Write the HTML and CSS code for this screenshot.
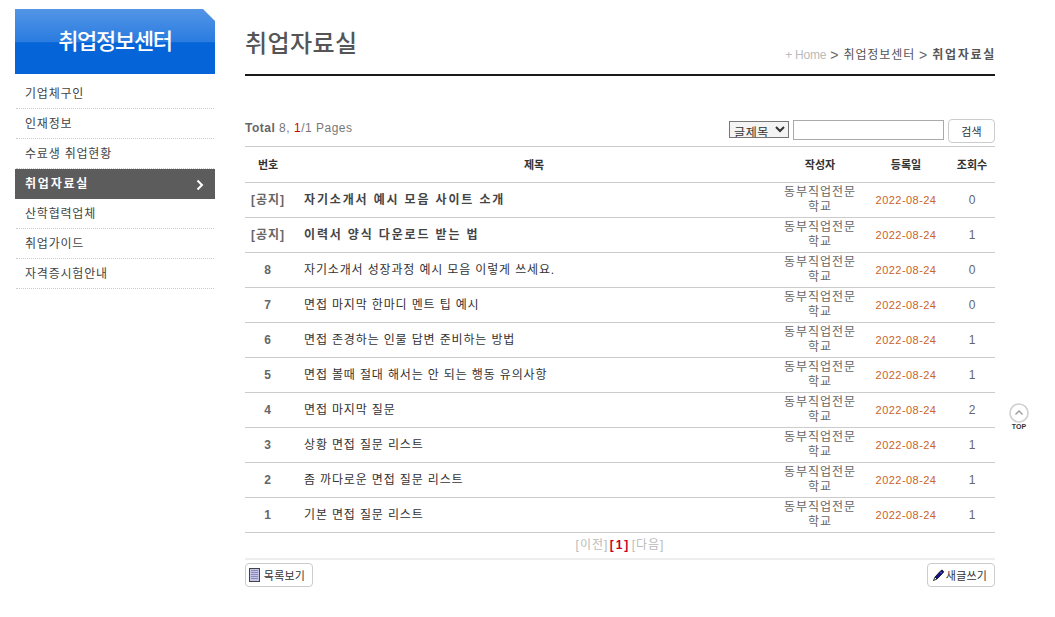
FILE: index.html
```html
<!DOCTYPE html>
<html lang="ko">
<head>
<meta charset="utf-8">
<title>취업자료실</title>
<link rel="stylesheet" href="styles.css">
</head>
<body>
<div class="page">
  <aside class="side">
    <h2 class="side-title">취업정보센터</h2>
    <ul class="menu">
      <li><a>기업체구인</a></li>
      <li><a>인재정보</a></li>
      <li><a>수료생 취업현황</a></li>
      <li class="on"><a>취업자료실</a><svg class="chev" width="8" height="12" viewBox="0 0 8 12"><path d="M1.500 1.500 6 6l-4.500 4.500" fill="none" stroke="#fff" stroke-width="2"/></svg></li>
      <li><a>산학협력업체</a></li>
      <li><a>취업가이드</a></li>
      <li><a>자격증시험안내</a></li>
    </ul>
  </aside>
  <main class="main">
    <header class="head">
      <h1>취업자료실</h1>
      <div class="crumb"><span class="home">+ Home</span><span class="sep">&gt;</span>취업정보센터<span class="sep">&gt;</span><b>취업자료실</b></div>
    </header>
    <div class="tools">
      <div class="total"><b>Total</b> 8, <em>1</em>/1 Pages</div>
      <form class="search">
        <select class="sel"><option>글제목</option></select>
        <input class="inp" type="text">
        <button class="btn srch" type="button">검색</button>
      </form>
    </div>
    <table class="list">
      <thead>
        <tr><th class="c-no">번호</th><th class="c-ti">제목</th><th class="c-wr">작성자</th><th class="c-da">등록일</th><th class="c-hi">조회수</th></tr>
      </thead>
      <tbody>
        <tr class="notice"><td class="no">[공지]</td><td class="ti">자기소개서 예시 모음 사이트 소개</td><td class="wr">동부직업전문학교</td><td class="da">2022-08-24</td><td class="hi">0</td></tr>
        <tr class="notice"><td class="no">[공지]</td><td class="ti">이력서 양식 다운로드 받는 법</td><td class="wr">동부직업전문학교</td><td class="da">2022-08-24</td><td class="hi">1</td></tr>
        <tr><td class="no">8</td><td class="ti">자기소개서 성장과정 예시 모음 이렇게 쓰세요.</td><td class="wr">동부직업전문학교</td><td class="da">2022-08-24</td><td class="hi">0</td></tr>
        <tr><td class="no">7</td><td class="ti">면접 마지막 한마디 멘트 팁 예시</td><td class="wr">동부직업전문학교</td><td class="da">2022-08-24</td><td class="hi">0</td></tr>
        <tr><td class="no">6</td><td class="ti">면접 존경하는 인물 답변 준비하는 방법</td><td class="wr">동부직업전문학교</td><td class="da">2022-08-24</td><td class="hi">1</td></tr>
        <tr><td class="no">5</td><td class="ti">면접 볼때 절대 해서는 안 되는 행동 유의사항</td><td class="wr">동부직업전문학교</td><td class="da">2022-08-24</td><td class="hi">1</td></tr>
        <tr><td class="no">4</td><td class="ti">면접 마지막 질문</td><td class="wr">동부직업전문학교</td><td class="da">2022-08-24</td><td class="hi">2</td></tr>
        <tr><td class="no">3</td><td class="ti">상황 면접 질문 리스트</td><td class="wr">동부직업전문학교</td><td class="da">2022-08-24</td><td class="hi">1</td></tr>
        <tr><td class="no">2</td><td class="ti">좀 까다로운 면접 질문 리스트</td><td class="wr">동부직업전문학교</td><td class="da">2022-08-24</td><td class="hi">1</td></tr>
        <tr><td class="no">1</td><td class="ti">기본 면접 질문 리스트</td><td class="wr">동부직업전문학교</td><td class="da">2022-08-24</td><td class="hi">1</td></tr>
      </tbody>
    </table>
    <div class="pager">[이전] <b>[1]</b> [다음]</div>
    <div class="actions">
      <button class="btn act act-list" type="button"><svg width="11" height="14" viewBox="0 0 11 14"><rect x=".5" y=".5" width="10" height="13" fill="#c4c4e6" stroke="#444"/><path d="M2 2.500h7M2 4.500h7M2 6.500h7M2 8.500h7M2 10.500h7" stroke="#8a8ab4"/></svg>목록보기</button>
      <button class="btn act act-write" type="button"><svg width="13" height="13" viewBox="0 0 13 13"><path d="M3 8 9 1.500q1-.8 2 .2t.2 2L5 10z" fill="#14148c" stroke="#000" stroke-width=".8"/><path d="M8.500 3 10 4.500" stroke="#7f8fe0"/><path d="M3 8l2 2-3.500 1.500z" fill="#fff" stroke="#000" stroke-width=".8"/></svg>새글쓰기</button>
    </div>
  </main>
  <a class="top">
    <svg width="20" height="20" viewBox="0 0 20 20"><circle cx="10" cy="10" r="9" fill="#fff" stroke="#cfcfcf" stroke-width="1.600"/><path d="M6.500 11.500 10 8l3.500 3.500" fill="none" stroke="#999" stroke-width="1.300"/></svg>
    <span>TOP</span>
  </a>
</div>
</body>
</html>
```
FILE: styles.css
```css
* { box-sizing: border-box; }
html, body { margin: 0; padding: 0; background: #fff; }
body { font: 12px/16px "Liberation Sans", "Noto Sans CJK KR", sans-serif; color: #444; }
ul { list-style: none; margin: 0; padding: 0; }
h1, h2 { margin: 0; font-weight: 400; }
.page { position: relative; display: flex; gap: 30px; width: 1055px; height: 617px; padding: 9px 0 0 15px; overflow: hidden; }

.side { width: 200px; flex: none; }
.side-title {
  height: 65px; padding-top: 17px; text-align: center; color: #fff; font-size: 22px; font-weight: 500; line-height: 32px; letter-spacing: -1.300px;
  background: linear-gradient(#5395e6 0, #2a7ce0 50%, #0464d8 52%, #0464d8 100%);
  clip-path: polygon(0 0, 188px 0, 200px 12px, 200px 100%, 0 100%);
}
.menu { padding-top: 5px; }
.menu li { position: relative; height: 30px; padding: 1px 0 0 10px; line-height: 29px; margin: 0 1px; border-bottom: 1px dotted #ccc; color: #444; letter-spacing: .8px; }
.menu li a { margin-left: -1px; }
.menu li.on { margin: 0; padding: 1px 0 0 11px; background: #5c5c5c; color: #fff; font-weight: 700; border-bottom: 0; height: 30px; line-height: 28px; letter-spacing: 1.800px; }
.chev { position: absolute; right: 11px; top: 10px; }

.main { width: 750px; flex: none; }
.head { position: relative; height: 67px; border-bottom: 2px solid #1a1a1a; }
.head h1 { padding-top: 17px; font-size: 24px; font-weight: 500; line-height: 36px; color: #555; letter-spacing: .4px; }
.crumb { position: absolute; right: 0; bottom: 10px; display: flex; color: #555; line-height: 18px; letter-spacing: .9px; }
.crumb .home { color: #bbb; letter-spacing: -.2px; }
.crumb b { color: #555; letter-spacing: 1.700px; margin-right: -1px; }
.sep { font-size: 14px; font-weight: 400; color: #666; margin: 0 5px 0 4px; letter-spacing: 0; }

.tools { display: flex; justify-content: space-between; align-items: flex-start; height: 70px; padding-top: 43px; }
.total { color: #777; line-height: 16px; padding-top: 1px; letter-spacing: .5px; }
.total b { color: #666; }
.total em { color: #c00; font-style: normal; }
.search { display: flex; align-items: flex-start; }
.sel { width: 60px; height: 17px; margin-top: 2px; padding: 0; border: 1px solid #777; font: 12px/15px "Noto Sans CJK KR", sans-serif; color: #333; background: #f4f4f4; letter-spacing: .6px; }
.inp { width: 151px; height: 20px; margin: 1px 0 0 4px; border: 1px solid #aaa; background: #fff; }
.btn { display: inline-flex; align-items: center; justify-content: center; gap: 4px; padding: 0; background: #fff; border: 1px solid #ccc; border-radius: 4px; font: 11px/16px "Noto Sans CJK KR", sans-serif; color: #333; letter-spacing: .2px; }
.srch { width: 47px; height: 24px; margin-left: 4px; }

.list { width: 750px; table-layout: fixed; border-collapse: collapse; border-top: 1px solid #ccc; }
.list th { height: 36px; border-bottom: 1px solid #ccc; font-weight: 700; color: #333; padding: 0; font-size: 11px; }
.list td { height: 35px; border-bottom: 1px solid #ccc; padding: 0; text-align: center; }
.c-no { width: 46px; }
.c-wr { width: 90px; }
.c-da { width: 82px; }
.c-hi { width: 48px; padding-left: 2px !important; }
.c-ti { padding-left: 2px !important; }
.list td.no { color: #666; font-weight: 700; letter-spacing: 1px; }
.list td.ti { text-align: left; padding-left: 13px; color: #333; letter-spacing: .85px; }
.list .notice .ti { color: #444; font-weight: 700; letter-spacing: 1.850px; }
.list td.wr { color: #666; line-height: 15px; padding: 0 7px 0; letter-spacing: 1px; }
.list td.da { color: #c9642a; font-size: 11px; letter-spacing: .45px; padding-bottom: 1px; }
.list td.hi { color: #666; padding-left: 2px; }

.pager { height: 27px; line-height: 24px; text-align: center; color: #bbb; border-bottom: 2px solid #eee; letter-spacing: 1px; word-spacing: -3px; }
.pager b { color: #c4002b; letter-spacing: 2px; }
.actions { display: flex; justify-content: space-between; padding-top: 3px; }
.act { width: 68px; height: 24px; }
.act-list { padding-right: 4px; }
.act-write { gap: 1px; padding-right: 3px; }

.top { position: absolute; left: 1009px; top: 403px; display: flex; flex-direction: column; align-items: center; width: 20px; color: #333; }
.top span { font: 700 7px/7px "Liberation Sans", sans-serif; }
```
